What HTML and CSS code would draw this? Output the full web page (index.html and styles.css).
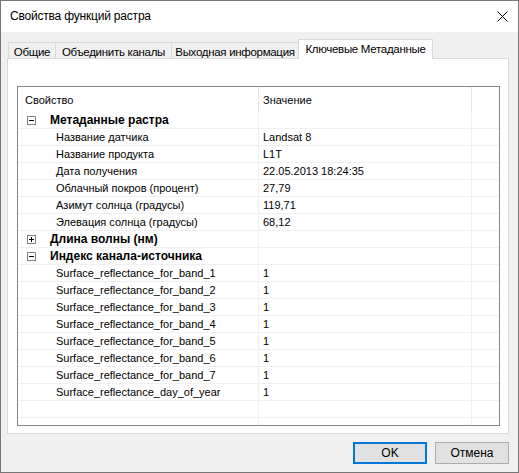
FILE: index.html
```html
<!DOCTYPE html>
<html lang="ru">
<head>
<meta charset="utf-8">
<title>Свойства функций растра</title>
<link rel="stylesheet" href="styles.css">
</head>
<body>
<div class="window">
  <div class="titlebar">
    <span class="title">Свойства функций растра</span>
    <span class="close">
      <svg width="11" height="11" viewBox="0 0 11 11"><path d="M0.5 0.5 L10.5 10.5 M10.5 0.5 L0.5 10.5" stroke="#000" stroke-width="1" fill="none"/></svg>
    </span>
  </div>
  <div class="content">
    <div class="tabs">
      <div class="tab t1">Общие</div>
      <div class="tab t2">Объединить каналы</div>
      <div class="tab t3">Выходная информация</div>
      <div class="tab active">Ключевые Метаданные</div>
    </div>
    <div class="panel">
      <div class="grid">
        <div class="row header">
          <div class="cell c1">Свойство</div>
          <div class="cell c2">Значение</div>
          <div class="cell c3"></div>
        </div>
        <div class="row group">
          <div class="cell c1"><span class="box minus"></span><span class="gname">Метаданные растра</span></div>
          <div class="cell c2"></div>
          <div class="cell c3"></div>
        </div>
        <div class="row"><div class="cell c1 child">Название датчика</div><div class="cell c2">Landsat 8</div><div class="cell c3"></div></div>
        <div class="row"><div class="cell c1 child">Название продукта</div><div class="cell c2">L1T</div><div class="cell c3"></div></div>
        <div class="row"><div class="cell c1 child">Дата получения</div><div class="cell c2">22.05.2013 18:24:35</div><div class="cell c3"></div></div>
        <div class="row"><div class="cell c1 child">Облачный покров (процент)</div><div class="cell c2">27,79</div><div class="cell c3"></div></div>
        <div class="row"><div class="cell c1 child">Азимут солнца (градусы)</div><div class="cell c2">119,71</div><div class="cell c3"></div></div>
        <div class="row"><div class="cell c1 child">Элевация солнца (градусы)</div><div class="cell c2">68,12</div><div class="cell c3"></div></div>
        <div class="row group">
          <div class="cell c1"><span class="box plus"></span><span class="gname">Длина волны (нм)</span></div>
          <div class="cell c2"></div>
          <div class="cell c3"></div>
        </div>
        <div class="row group">
          <div class="cell c1"><span class="box minus"></span><span class="gname">Индекс канала-источника</span></div>
          <div class="cell c2"></div>
          <div class="cell c3"></div>
        </div>
        <div class="row"><div class="cell c1 child">Surface_reflectance_for_band_1</div><div class="cell c2">1</div><div class="cell c3"></div></div>
        <div class="row"><div class="cell c1 child">Surface_reflectance_for_band_2</div><div class="cell c2">1</div><div class="cell c3"></div></div>
        <div class="row"><div class="cell c1 child">Surface_reflectance_for_band_3</div><div class="cell c2">1</div><div class="cell c3"></div></div>
        <div class="row"><div class="cell c1 child">Surface_reflectance_for_band_4</div><div class="cell c2">1</div><div class="cell c3"></div></div>
        <div class="row"><div class="cell c1 child">Surface_reflectance_for_band_5</div><div class="cell c2">1</div><div class="cell c3"></div></div>
        <div class="row"><div class="cell c1 child">Surface_reflectance_for_band_6</div><div class="cell c2">1</div><div class="cell c3"></div></div>
        <div class="row"><div class="cell c1 child">Surface_reflectance_for_band_7</div><div class="cell c2">1</div><div class="cell c3"></div></div>
        <div class="row"><div class="cell c1 child">Surface_reflectance_day_of_year</div><div class="cell c2">1</div><div class="cell c3"></div></div>
        <div class="row"><div class="cell c1"></div><div class="cell c2"></div><div class="cell c3"></div></div>
        <div class="row"><div class="cell c1"></div><div class="cell c2"></div><div class="cell c3"></div></div>
      </div>
    </div>
    <div class="buttons">
      <button class="btn default">OK</button>
      <button class="btn">Отмена</button>
    </div>
  </div>
</div>
</body>
</html>
```

FILE: styles.css
```css
* { box-sizing: border-box; }
html, body { margin: 0; padding: 0; }
body {
  width: 519px;
  height: 473px;
  overflow: hidden;
  background: #f0f0f0;
  font-family: "Liberation Sans", Arial, sans-serif;
  color: #000;
}
.window {
  width: 519px;
  height: 473px;
  border: 1px solid #777777;
  background: #f0f0f0;
  display: flex;
  flex-direction: column;
}
.titlebar {
  height: 31px;
  background: #fff;
  display: flex;
  align-items: center;
  justify-content: space-between;
  padding: 0 10px 0 9px;
  flex: none;
}
.title {
  font-size: 12px;
  line-height: 16px;
  letter-spacing: -0.2px;
  padding-bottom: 1px;
}
.close {
  display: flex;
  width: 11px;
  height: 11px;
  margin-bottom: 1px;
}
.content {
  flex: 1;
  padding: 7px 9px 0 6px;
  display: flex;
  flex-direction: column;
}
.tabs {
  height: 19px;
  display: flex;
  align-items: flex-end;
  padding-left: 1px;
  font-size: 11.5px;
  letter-spacing: -0.3px;
}
.tab {
  height: 16px;
  border-top: 1px solid #d9d9d9;
  border-left: 1px solid #d9d9d9;
  background: #f0f0f0;
  text-align: center;
  line-height: 15px;
  padding-top: 2px;
  white-space: nowrap;
}
.t1 { width: 47px; }
.t2 { width: 116px; }
.t3 { width: 127px; }
.tab.active {
  width: 135px;
  height: 20px;
  margin-bottom: -1px;
  background: #fff;
  border-right: 1px solid #d9d9d9;
  position: relative;
  z-index: 1;
  line-height: 15px;
  padding-top: 2px;
}
.panel {
  height: 376px;
  background: #fff;
  border: 1px solid #d9d9d9;
  padding: 27px 0 0 9px;
  flex: none;
}
.grid {
  width: 483px;
  height: 340px;
  border: 1px solid #828790;
  overflow: hidden;
  font-size: 11px;
}
.row {
  display: grid;
  grid-template-columns: 241px 213px 1fr;
  height: 17px;
  border-bottom: 1px solid #f0f0f0;
}
.cell {
  border-right: 1px solid #f0f0f0;
  line-height: 16px;
  white-space: nowrap;
  overflow: hidden;
  display: flex;
  align-items: center;
}
.cell.c3 { border-right: none; }
.c2 { padding-left: 4px; }
.child { padding-left: 38px; }
.row.header {
  height: 25px;
  border-bottom: none;
}
.row.header .cell {
  border-right-color: #e5e5e5;
}
.row.header .c1 { padding-left: 7px; }
.row.header .c2 { padding-left: 4px; }
.row.group .c1 { padding-left: 9px; }
.box {
  width: 9px;
  height: 9px;
  border: 1px solid #808080;
  position: relative;
  flex: none;
  margin-right: 14px;
}
.box::before {
  content: "";
  position: absolute;
  left: 1px;
  top: 3px;
  width: 5px;
  height: 1px;
  background: #000;
}
.box.plus::after {
  content: "";
  position: absolute;
  left: 3px;
  top: 1px;
  width: 1px;
  height: 5px;
  background: #000;
}
.gname {
  font-weight: bold;
  font-size: 12px;
}
.buttons {
  margin-top: 8px;
  display: flex;
  justify-content: flex-end;
  gap: 8px;
}
.btn {
  width: 74px;
  height: 22px;
  font-family: "Liberation Sans", Arial, sans-serif;
  font-size: 12px;
  background: #e1e1e1;
  border: 1px solid #adadad;
  padding: 0;
  color: #000;
}
.btn.default {
  border: 2px solid #0078d7;
}
```
